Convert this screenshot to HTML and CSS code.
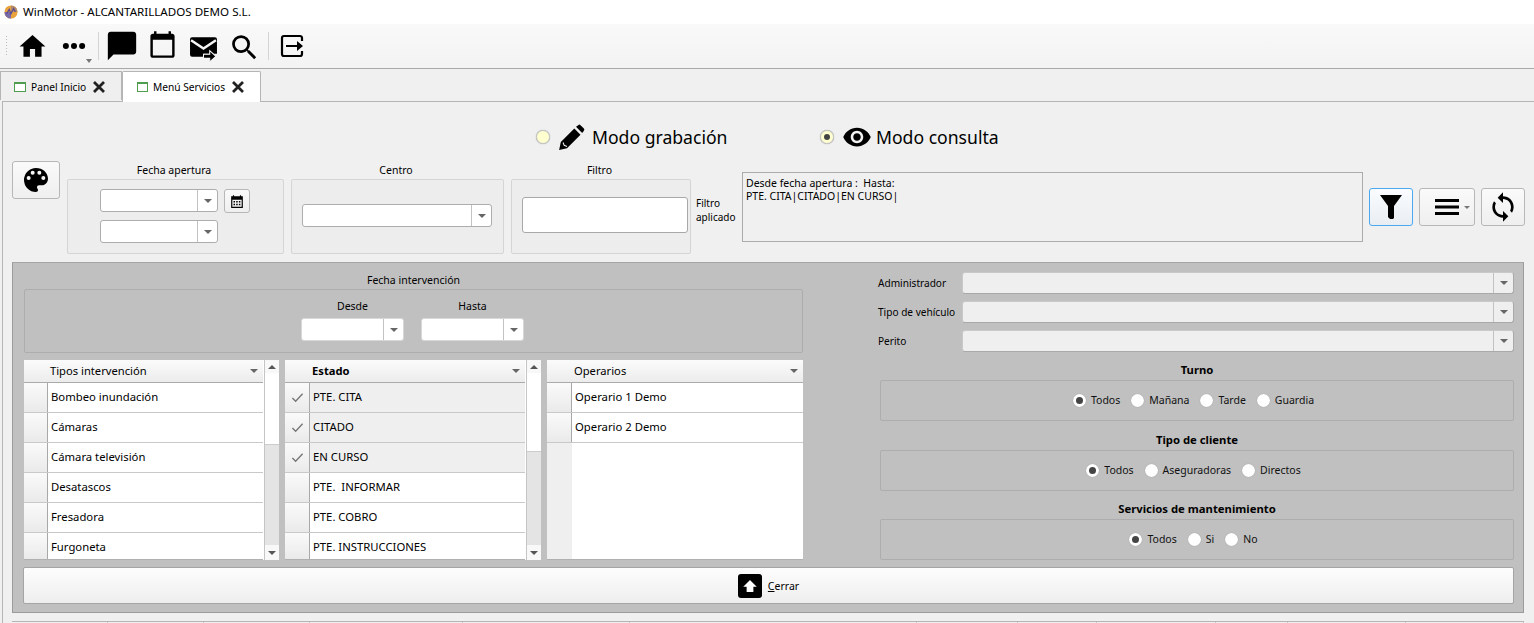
FILE: index.html
```html
<!DOCTYPE html>
<html lang="es">
<head>
<meta charset="utf-8">
<title>WinMotor</title>
<link rel="stylesheet" href="styles.css">
</head>
<body>
<header class="titlebar">
  <svg class="logo" viewBox="0 0 16 16"><circle cx="8" cy="8" r="7.500" fill="#e8a33c"/><path d="M8 .5A7.500 7.500 0 0 1 15.500 8H8z" fill="#b08a6a"/><path d="M.5 8A7.500 7.500 0 0 0 8 15.500V8z" fill="#7a6aa8"/><path d="M3 10l3-5 2 5 3-6 2 4" fill="none" stroke="#5a4a90" stroke-width="1.400"/></svg>
  <span>WinMotor - ALCANTARILLADOS DEMO S.L.</span>
</header>

<nav class="toolbar">
  <span class="grip"></span>
  <svg class="tool home" viewBox="0 0 24 24"><path d="M10 20v-6h4v6h5v-8h3L12 3 2 12h3v8z"/></svg>
  <span class="more">
    <svg class="dots" viewBox="0 0 24 24"><circle cx="5.500" cy="12" r="2.400"/><circle cx="12" cy="12" r="2.400"/><circle cx="18.500" cy="12" r="2.400"/></svg>
    <i class="caret small"></i>
  </span>
  <span class="sep"></span>
  <svg class="tool chat" viewBox="0 0 24 24"><path d="M20 2H4c-1.100 0-2 .9-2 2v18l4-4h14c1.100 0 2-.9 2-2V4c0-1.100-.9-2-2-2z"/></svg>
  <svg class="tool cal" viewBox="0 0 24 24"><path d="M20 3h-1V1h-2v2H7V1H5v2H4c-1.100 0-2 .9-2 2v16c0 1.100.9 2 2 2h16c1.100 0 2-.9 2-2V5c0-1.100-.9-2-2-2zm0 18H4V8h16v13z"/></svg>
  <svg class="tool mail" viewBox="0 0 28 24"><path d="M3 2h22a2 2 0 0 1 2 2v14H14v3H3a2 2 0 0 1-2-2V4a2 2 0 0 1 2-2z"/><path d="M2 5l12 8 12-8" fill="none" stroke="#f6f6f6" stroke-width="2.400"/><path d="M14 18.500h6V15l6 5.500-6 5.500v-3.500h-6z" stroke="#f6f6f6" stroke-width="1"/></svg>
  <svg class="tool search" viewBox="0 0 24 24"><path d="M15.500 14h-.79l-.28-.27A6.471 6.471 0 0 0 16 9.500 6.500 6.500 0 1 0 9.500 16c1.610 0 3.090-.59 4.230-1.570l.27.28v.79l5 4.990L20.490 19l-4.990-5zm-6 0C7.010 14 5 11.990 5 9.500S7.010 5 9.500 5 14 7.010 14 9.500 11.990 14 9.500 14z"/></svg>
  <span class="sep second"></span>
  <svg class="tool exit" viewBox="0 0 24 24"><path d="M22 7V4a2 2 0 0 0-2-2H4a2 2 0 0 0-2 2v16a2 2 0 0 0 2 2h16a2 2 0 0 0 2-2v-3" fill="none" stroke="#000" stroke-width="2.200"/><path d="M6 11h11V7l6 5-6 5v-4H6z"/></svg>
</nav>

<div class="tabs">
  <div class="tab">
    <span class="tabicon"></span><span>Panel Inicio</span>
    <svg class="close" viewBox="0 0 12 12"><path d="M1 1l10 10M11 1L1 11"/></svg>
  </div>
  <div class="tab active">
    <span class="tabicon"></span><span>Menú Servicios</span>
    <svg class="close" viewBox="0 0 12 12"><path d="M1 1l10 10M11 1L1 11"/></svg>
  </div>
</div>

<main class="page">
  <div class="modes">
    <div class="mode first">
      <span class="moderadio"></span>
      <svg class="modeicon pencil" viewBox="0 0 24 24"><path d="M1 23l1.500-7L14.500 4l5.500 5.500L8 21.500z"/><path d="M16 2.500l2-1.500a1.500 1.500 0 0 1 2 0l3 3a1.500 1.500 0 0 1 0 2l-1.500 2z"/><path d="M4.500 16.500l1 2.500 2.500 1" fill="none" stroke="#f0f0f0" stroke-width="1"/></svg>
      <span>Modo grabación</span>
    </div>
    <div class="mode">
      <span class="moderadio on"></span>
      <svg class="modeicon eye" viewBox="0 0 24 24"><path d="M12 4.500C7 4.500 2.730 7.610 1 12c1.730 4.390 6 7.500 11 7.500s9.270-3.110 11-7.500c-1.730-4.390-6-7.500-11-7.500zM12 17c-2.760 0-5-2.240-5-5s2.240-5 5-5 5 2.240 5 5-2.240 5-5 5zm0-8c-1.660 0-3 1.340-3 3s1.340 3 3 3 3-1.340 3-3-1.340-3-3-3z"/></svg>
      <span>Modo consulta</span>
    </div>
  </div>

  <section class="filters">
    <button class="btn palette" type="button">
      <svg viewBox="0 0 24 24"><path d="M12 3a9 9 0 0 0 0 18c.83 0 1.500-.67 1.500-1.500 0-.39-.15-.74-.39-1.010-.23-.26-.38-.61-.38-.99 0-.83.67-1.500 1.500-1.500H16c2.760 0 5-2.240 5-5 0-4.420-4.030-8-9-8zm-5.500 9a1.500 1.500 0 1 1 0-3 1.500 1.500 0 0 1 0 3zm3-4a1.500 1.500 0 1 1 0-3 1.500 1.500 0 0 1 0 3zm5 0a1.500 1.500 0 1 1 0-3 1.500 1.500 0 0 1 0 3zm3 4a1.500 1.500 0 1 1 0-3 1.500 1.500 0 0 1 0 3z"/></svg>
    </button>

    <div class="fgroup w217">
      <div class="glabel">Fecha apertura</div>
      <div class="gbox dates">
        <div class="daterow">
          <div class="combo c118"><i class="arrow"><b class="caret"></b></i></div>
          <button class="btn calbtn" type="button"><svg viewBox="0 0 12 12"><path d="M1 2h1.500V1h1v1h5V1h1v1H11v10H1zM2 5v6h8V5z"/><path d="M3 6h1.300v1.200H3zM5.300 6h1.300v1.200H5.300zM7.600 6h1.300v1.200H7.600zM3 8.400h1.300v1.200H3zM5.300 8.400h1.300v1.200H5.300zM7.600 8.400h1.300v1.200H7.600z"/></svg></button>
        </div>
        <div class="daterow">
          <div class="combo c118"><i class="arrow"><b class="caret"></b></i></div>
        </div>
      </div>
    </div>

    <div class="fgroup w213">
      <div class="glabel">Centro</div>
      <div class="gbox center pad-left">
        <div class="combo c190"><i class="arrow"><b class="caret"></b></i></div>
      </div>
    </div>

    <div class="fgroup w180">
      <div class="glabel">Filtro</div>
      <div class="gbox center pad-filter">
        <div class="textinput"></div>
      </div>
    </div>

    <div class="applabel">Filtro<br>aplicado</div>
    <div class="applied">Desde fecha apertura :&nbsp; Hasta:<br>PTE. CITA|CITADO|EN CURSO|</div>

    <div class="actions">
      <button class="btn act focus" type="button"><svg viewBox="0 0 24 24"><path d="M1 0h22l-8 11v12l-1 1h-3l-2-2V11z"/></svg></button>
      <button class="btn act wide" type="button"><svg viewBox="0 0 24 24"><path d="M0 4h24v3H0zM0 10.500h24v3H0zM0 17h24v3H0z"/></svg><b class="caret tiny"></b></button>
      <button class="btn act" type="button"><svg class="sync" viewBox="0 0 24 24"><path d="M12 4V1L8 5l4 4V6c3.310 0 6 2.690 6 6 0 1.010-.25 1.970-.7 2.800l1.460 1.460A7.930 7.930 0 0 0 20 12c0-4.420-3.580-8-8-8zm0 14c-3.310 0-6-2.690-6-6 0-1.010.25-1.970.7-2.800L5.240 7.740A7.930 7.930 0 0 0 4 12c0 4.420 3.580 8 8 8v3l4-4-4-4v3z"/></svg></button>
    </div>
  </section>

  <section class="graypanel">
    <div class="grid">
      <div class="leftcol">
        <div class="glabel gl-int">Fecha intervención</div>
        <div class="intbox">
          <div class="intcol"><span>Desde</span><div class="combo c103"><i class="arrow"><b class="caret"></b></i></div></div>
          <div class="intcol"><span>Hasta</span><div class="combo c103"><i class="arrow"><b class="caret"></b></i></div></div>
        </div>
        <div class="lists">
          <div class="list">
            <div class="listmain">
              <div class="lhead"><span>Tipos intervención</span><b class="caret"></b></div>
              <div class="row"><i></i><span>Bombeo inundación</span></div>
              <div class="row"><i></i><span>Cámaras</span></div>
              <div class="row"><i></i><span>Cámara televisión</span></div>
              <div class="row"><i></i><span>Desatascos</span></div>
              <div class="row"><i></i><span>Fresadora</span></div>
              <div class="row last"><i></i><span>Furgoneta</span></div>
            </div>
            <div class="scroll"><b class="up"></b><span class="thumb t72"></span><span class="track"></span><b class="down"></b></div>
          </div>
          <div class="list">
            <div class="listmain">
              <div class="lhead bold"><span>Estado</span><b class="caret"></b></div>
              <div class="row sel"><i><svg viewBox="0 0 14 14"><path d="M1.500 7.500l3.500 3.500 7.500-8"/></svg></i><span>PTE. CITA</span></div>
              <div class="row sel"><i><svg viewBox="0 0 14 14"><path d="M1.500 7.500l3.500 3.500 7.500-8"/></svg></i><span>CITADO</span></div>
              <div class="row sel"><i><svg viewBox="0 0 14 14"><path d="M1.500 7.500l3.500 3.500 7.500-8"/></svg></i><span>EN CURSO</span></div>
              <div class="row"><i></i><span>PTE.&nbsp; INFORMAR</span></div>
              <div class="row"><i></i><span>PTE. COBRO</span></div>
              <div class="row last"><i></i><span>PTE. INSTRUCCIONES</span></div>
            </div>
            <div class="scroll"><b class="up"></b><span class="thumb t78"></span><span class="track"></span><b class="down"></b></div>
          </div>
          <div class="list ops">
            <div class="listmain">
              <div class="lhead"><span>Operarios</span><b class="caret"></b></div>
              <div class="row"><i></i><span>Operario 1 Demo</span></div>
              <div class="row"><i></i><span>Operario 2 Demo</span></div>
              <div class="rest"><i></i></div>
            </div>
          </div>
        </div>
      </div>

      <div class="rightcol">
        <div class="field"><label>Administrador</label><div class="combo grow dis"><i class="arrow"><b class="caret"></b></i></div></div>
        <div class="field"><label>Tipo de vehículo</label><div class="combo grow dis"><i class="arrow"><b class="caret"></b></i></div></div>
        <div class="field"><label>Perito</label><div class="combo grow dis"><i class="arrow"><b class="caret"></b></i></div></div>

        <div class="rgroup g1">
          <div class="rlabel">Turno</div>
          <div class="rbox">
            <span class="radio on"></span><span class="rt">Todos</span>
            <span class="radio"></span><span class="rt">Mañana</span>
            <span class="radio"></span><span class="rt">Tarde</span>
            <span class="radio"></span><span class="rt">Guardia</span>
          </div>
        </div>
        <div class="rgroup">
          <div class="rlabel">Tipo de cliente</div>
          <div class="rbox">
            <span class="radio on"></span><span class="rt">Todos</span>
            <span class="radio"></span><span class="rt">Aseguradoras</span>
            <span class="radio"></span><span class="rt">Directos</span>
          </div>
        </div>
        <div class="rgroup">
          <div class="rlabel">Servicios de mantenimiento</div>
          <div class="rbox">
            <span class="radio on"></span><span class="rt">Todos</span>
            <span class="radio"></span><span class="rt">Si</span>
            <span class="radio"></span><span class="rt">No</span>
          </div>
        </div>
      </div>
    </div>

    <button class="btn closebar" type="button">
      <span class="upicon"><svg viewBox="0 0 24 24"><path d="M12 4l9 9h-4.500v7h-9v-7H3z"/></svg></span>
      <span><u>C</u>errar</span>
    </button>
  </section>

  <div class="strip">
    <span class="s96"></span><span class="s96"></span><span class="s106"></span><span class="s153"></span><span class="s167"></span><span class="s287"></span><span class="s101"></span><span class="s79"></span><span class="s119"></span><span class="s72"></span><span class="s118"></span><span class="s120"></span>
  </div>
</main>
</body>
</html>
```
FILE: styles.css
```css
* { box-sizing: border-box; }
html, body { margin: 0; padding: 0; height: 623px; overflow: hidden; }
body {
  background: #f0f0f0;
  color: #000;
  font-family: "Noto Sans", "Liberation Sans", sans-serif;
  font-size: 11px;
  line-height: 14px;
}
button { font: inherit; color: inherit; padding: 0; }
svg { display: block; }

/* title bar */
.titlebar { height: 24px; background: #fff; display: flex; align-items: center; padding: 0 0 0 4px; gap: 5px; font-size: 11.6px; }
.logo { width: 14px; height: 14px; }

/* toolbar */
.toolbar { height: 45px; background: linear-gradient(#f9f9f9, #f3f3f3); border-bottom: 1px solid #a9a9a9; display: flex; align-items: center; padding-left: 5px; }
.grip { width: 4px; height: 22px; margin-right: 8px; background: radial-gradient(circle, #bbb 0.6px, transparent 0.8px) 0 0 / 3px 3px; }
.tool { flex: none; }
.home { width: 31px; height: 31px; margin-right: 11px; }
.more { position: relative; width: 30px; height: 30px; flex: none; }
.dots { width: 30px; height: 30px; }
.more .caret { position: absolute; left: 27px; top: 28px; }
.sep { width: 1px; height: 28px; background: #d4d4d4; margin: 0 6px 0 9px; flex: none; }
.sep.second { margin: 0 11px 0 7px; }
.chat { width: 34px; height: 34px; margin-right: 9px; }
.cal { width: 29px; height: 29px; margin: -3px 12px 0 0; }
.mail { width: 29px; height: 25px; margin: 2px 10px 0 0; overflow: visible; }
.search { width: 33px; height: 33px; margin-top: 3px; }
.exit { width: 24px; height: 24px; overflow: visible; }

/* tabs */
.tabs { height: 32px; display: flex; align-items: flex-end; }
.tab { height: 29px; width: 122px; border: 1px solid #b5b5b5; border-bottom: 0; background: #efefef; display: flex; align-items: center; padding: 1px 0 0 13px; gap: 5px; font-size: 10.2px; margin-bottom: 1px; }
.tab.active { height: 31px; width: 139px; padding: 0 0 0 14px; background: #fff; border-radius: 2px 2px 0 0; margin-bottom: -1px; position: relative; z-index: 1; }
.tabicon { width: 12px; height: 10px; border: 1.5px solid #4f9e4f; border-top-width: 2px; background: #fff; flex: none; }
.active .tabicon { width: 11px; }
.close { width: 12px; height: 12px; margin-left: 2px; fill: none; stroke: #222; stroke-width: 2.800; }

/* page */
.page { height: 523px; margin-left: 2px; border-top: 1px solid #b5b5b5; border-left: 1px solid #b5b5b5; background: #f0f0f0; padding: 0 0 0 9px; }
.modes { height: 58px; display: flex; justify-content: flex-start; align-items: center; padding: 12px 0 0 524px; font-size: 17.6px; }
.mode { display: flex; align-items: center; gap: 6px; }
.mode.first { width: 284px; }
.moderadio { width: 14px; height: 14px; border-radius: 50%; background: #ffffd0; border: 1px solid #c5c5c5; box-shadow: 0 0 1px #999; margin-right: 2px; display: grid; place-items: center; }
.moderadio.on::after { content: ""; width: 6px; height: 6px; border-radius: 50%; background: #444; }
.modeicon { width: 27px; height: 27px; }
.pencil { margin-right: 1px; }
.eye { width: 30px; height: 30px; margin-right: -2px; }

.filters { height: 102px; display: flex; align-items: flex-start; }
.btn { background: linear-gradient(#fafafa, #efefef); border: 1px solid #b7b7b7; border-radius: 3px; display: flex; align-items: center; justify-content: center; flex: none; }
.palette { width: 48px; height: 38px; margin: 1px 7px 0 0; }
.palette svg { width: 32px; height: 32px; }
.fgroup { flex: none; margin-right: 7px; }
.w217 { width: 217px; }
.w213 { width: 213px; }
.w180 { width: 180px; margin-right: 5px; }
.glabel { height: 19px; text-align: center; line-height: 20px; font-size: 10.5px; padding-right: 3px; }
.gbox { height: 75px; background: #ededed; border: 1px solid #d5d5d5; border-radius: 2px; }
.gbox.center { display: flex; align-items: center; }
.pad-left { padding: 0 0 2px 10px; }
.pad-filter { padding: 0 0 3px 10px; }
.dates { padding: 9px 0 0 32px; display: flex; flex-direction: column; gap: 7px; }
.daterow { display: flex; gap: 6px; }
.calbtn { width: 26px; height: 24px; }
.calbtn svg { width: 14px; height: 14px; }

.combo { height: 23px; background: #fff; border: 1px solid #adadad; border-radius: 3px; display: flex; justify-content: flex-end; flex: none; }
.c118 { width: 118px; }
.c190 { width: 190px; }
.c103 { width: 103px; border-color: #d8d8d8; }
.grow { flex: 1; }
.dis { background: #efefef; border-color: #c9c9c9 #a9a9a9 #a9a9a9 #c9c9c9; }
.arrow { width: 20px; border-left: 1px solid #c2c2c2; display: flex; align-items: center; justify-content: center; }
.caret { display: inline-block; width: 0; height: 0; border-left: 4px solid transparent; border-right: 4px solid transparent; border-top: 4px solid #666; }
.caret.small { border-width: 4px 3px 0; border-top-color: #777; }
.caret.tiny { border-width: 3px 3px 0; border-top-color: #777; margin: 0 0 0 5px; }
.textinput { width: 166px; height: 36px; background: #fff; border: 1px solid #a8a8a8; border-radius: 3px; }

.applabel { width: 46px; margin-top: 36px; font-size: 10px; line-height: 14px; flex: none; }
.applied { width: 621px; height: 70px; margin-top: 12px; border: 1px solid #ababab; padding: 4px 3px; font-size: 10.5px; line-height: 13px; flex: none; }
.actions { display: flex; gap: 6px; margin: 28px 0 0 6px; }
.act { width: 44px; height: 38px; }
.act svg { width: 24px; height: 24px; }
.act svg.sync { width: 32px; height: 32px; }
.act.wide { width: 56px; padding-left: 11px; }
.focus { border-color: #4aa8f0; background: linear-gradient(#fafcff, #e9eef2); }

/* gray panel */
.graypanel { width: 1512px; height: 351px; background: #c0c0c0; border: 1px solid #9b9b9b; border-top-color: #a5a5a5; padding: 8px 9px 0 11px; }
.grid { display: flex; height: 289px; }
.leftcol { width: 779px; flex: none; display: flex; flex-direction: column; }
.gl-int { height: 18px; line-height: 18px; padding-right: 0; }
.intbox { height: 64px; border: 1px solid #adadad; border-radius: 2px; display: flex; justify-content: center; gap: 17px; padding: 9px 2px 0 0; }
.intcol { display: flex; flex-direction: column; align-items: center; gap: 5px; font-size: 10.5px; }
.lists { display: flex; gap: 6px; margin-top: 7px; height: 200px; }
.list { width: 256px; display: flex; height: 200px; background: #fff; flex: none; }
.list:first-child { width: 255px; }
.listmain { flex: 1; min-width: 0; overflow: hidden; border-bottom: 1px solid #b0b0b0; display: flex; flex-direction: column; }
.lhead { height: 23px; flex: none; background: linear-gradient(#fbfbfb, #ececec); border-bottom: 1px solid #ababab; display: flex; align-items: center; justify-content: space-between; padding: 0 5px 0 26px; font-size: 11.2px; }
.lhead.bold { font-weight: 700; }
.list + .list .lhead { padding-left: 27px; }
.row { height: 30px; flex: none; background: #fff; border-bottom: 1px solid #c9c9c9; display: flex; }
.row.last { flex: 1; border-bottom: 0; min-height: 0; }
.row i { width: 24px; background: linear-gradient(#fafafa, #eaeaea); border-right: 1px solid #a8a8a8; flex: none; display: flex; align-items: center; justify-content: center; }
.list + .list .row i { width: 25px; }
.row i svg { width: 13px; height: 13px; fill: none; stroke: #777; stroke-width: 1.500; }
.row span { padding: 7px 0 0 3px; font-size: 11.3px; white-space: nowrap; }
.row.sel { background: #efefef; }
.rest { flex: 1; display: flex; }
.rest i { width: 25px; background: #efefef; }
.scroll { width: 15px; flex: none; display: flex; flex-direction: column; background: #e4e4e4; margin-left: 1px; border-left: 1px solid #c5c5c5; }
.scroll b { height: 13px; flex: none; background: #f8f8f8; display: flex; align-items: center; justify-content: center; }
.scroll .up::after { content: ""; border-left: 4px solid transparent; border-right: 4px solid transparent; border-bottom: 4px solid #555; }
.scroll .down { height: 15px; }
.scroll .down::after { content: ""; border-left: 4px solid transparent; border-right: 4px solid transparent; border-top: 4px solid #555; }
.thumb { background: #fff; flex: none; border-bottom: 1px solid #ccc; }
.t72 { height: 72px; }
.t78 { height: 79px; }
.track { flex: 1; }

.rightcol { margin-left: 75px; flex: 1; min-width: 0; padding-top: 1px; }
.field { display: flex; align-items: center; height: 22px; margin-bottom: 7px; }
.field label { width: 84px; flex: none; font-size: 10.1px; }
.field .combo { height: 22px; }
.rgroup { margin-left: 2px; }
.g1 { margin-top: 8px; }
.rlabel { height: 20px; font-weight: 700; text-align: center; font-size: 11.3px; line-height: 20px; }
.rbox { height: 41px; margin-bottom: 9px; border: 1px solid #adadad; border-radius: 2px; display: flex; align-items: center; justify-content: center; padding: 0 7px 1px 0; }
.rgroup:last-child .rbox { margin-bottom: 0; }
.rgroup:nth-last-child(2) .rbox { margin-bottom: 8px; }
.radio { width: 13px; height: 13px; border-radius: 50%; background: #fff; display: grid; place-items: center; flex: none; margin-right: 5px; box-shadow: 0 0 1px #888; }
.radio.on::after { content: ""; width: 7px; height: 7px; border-radius: 50%; background: #444; }
.rt { margin-right: 11px; font-size: 10.5px; color: #111; }
.rt:last-child { margin-right: 0; }

.closebar { width: 1491px; height: 37px; margin: 7px 0 0 -1px; border-radius: 2px; gap: 4px; background: linear-gradient(#fdfdfd, #eeeeee); border-color: #a5a5a5; font-size: 10.5px; }
.upicon { width: 24px; height: 24px; background: #000; border-radius: 3px; display: flex; align-items: center; justify-content: center; margin-right: 2px; }
.upicon svg { width: 18px; height: 18px; fill: #fff; }

.strip { display: flex; height: 2px; margin-top: 8px; border-top: 1px solid #b5b5b5; width: 1512px; }
.strip span { border-right: 1px solid #c5c5c5; height: 2px; flex: none; }
.s96 { width: 96px; } .s106 { width: 106px; } .s153 { width: 153px; } .s167 { width: 167px; } .s287 { width: 287px; } .s101 { width: 101px; } .s79 { width: 79px; } .s119 { width: 119px; } .s72 { width: 72px; } .s118 { width: 118px; } .s120 { width: 118px; }
```
